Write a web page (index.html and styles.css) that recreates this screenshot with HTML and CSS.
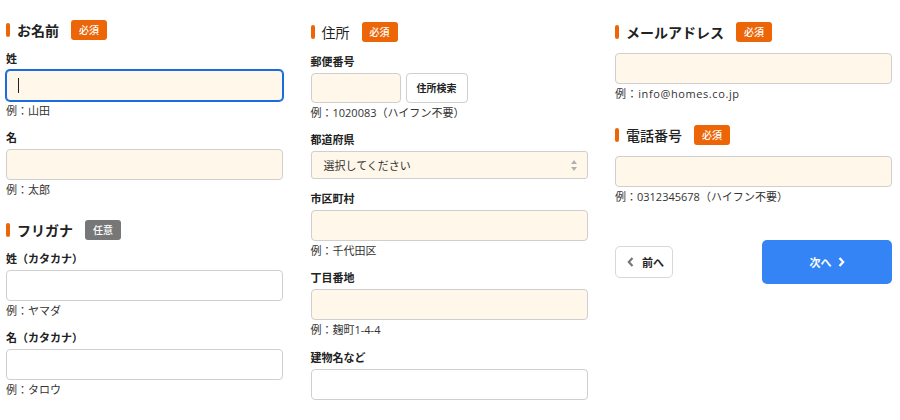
FILE: index.html
```html
<!DOCTYPE html>
<html lang="ja">
<head>
<meta charset="utf-8">
<title>お問い合わせフォーム</title>
<link rel="stylesheet" href="styles.css">
</head>
<body>
<div class="form">
  <div class="col col--name">
    <section class="section">
      <h2 class="heading"><span class="heading__title">お名前</span><span class="badge">必須</span></h2>
      <div class="field">
        <label class="label">姓</label>
        <div class="input input--focus"><span class="caret"></span></div>
        <p class="hint">例：山田</p>
      </div>
      <div class="field">
        <label class="label">名</label>
        <input class="input" type="text">
        <p class="hint">例：太郎</p>
      </div>
    </section>
    <section class="section">
      <h2 class="heading"><span class="heading__title">フリガナ</span><span class="badge badge--optional">任意</span></h2>
      <div class="field">
        <label class="label">姓（カタカナ）</label>
        <input class="input input--plain" type="text">
        <p class="hint">例：ヤマダ</p>
      </div>
      <div class="field">
        <label class="label">名（カタカナ）</label>
        <input class="input input--plain" type="text">
        <p class="hint">例：タロウ</p>
      </div>
    </section>
  </div>

  <div class="col col--offset">
    <section class="section section--wide">
      <h2 class="heading heading--light"><span class="heading__title">住所</span><span class="badge">必須</span></h2>
      <div class="field">
        <label class="label">郵便番号</label>
        <div class="postal">
          <input class="input input--postal" type="text">
          <button class="btn-search" type="button">住所検索</button>
        </div>
        <p class="hint">例：1020083（ハイフン不要）</p>
      </div>
      <div class="field">
        <label class="label">都道府県</label>
        <div class="select">
          <span>選択してください</span>
          <svg class="select__arrows" width="6" height="11" viewBox="0 0 6 11"><polygon points="0,4 3,0 6,4" fill="#b0b0b0"/><polygon points="0,7 3,11 6,7" fill="#b0b0b0"/></svg>
        </div>
      </div>
      <div class="field">
        <label class="label">市区町村</label>
        <input class="input" type="text">
        <p class="hint">例：千代田区</p>
      </div>
      <div class="field">
        <label class="label">丁目番地</label>
        <input class="input" type="text">
        <p class="hint">例：麹町1-4-4</p>
      </div>
      <div class="field">
        <label class="label">建物名など</label>
        <input class="input input--plain" type="text">
      </div>
    </section>
  </div>

  <div class="col col--offset col--contact">
    <section class="section">
      <h2 class="heading"><span class="heading__title">メールアドレス</span><span class="badge">必須</span></h2>
      <div class="field">
        <input class="input" type="text">
        <p class="hint hint--latin">例：info@homes.co.jp</p>
      </div>
    </section>
    <section class="section">
      <h2 class="heading heading--medium"><span class="heading__title">電話番号</span><span class="badge">必須</span></h2>
      <div class="field">
        <input class="input" type="text">
        <p class="hint">例：0312345678（ハイフン不要）</p>
      </div>
    </section>
    <div class="actions">
      <button class="btn-prev" type="button">
        <svg width="7" height="10" viewBox="0 0 7 10"><path d="M5.5 1 L1.8 5 L5.5 9" fill="none" stroke="#777" stroke-width="2.2"/></svg>
        <span>前へ</span>
      </button>
      <button class="btn-next" type="button">
        <span>次へ</span>
        <svg width="7" height="10" viewBox="0 0 7 10"><path d="M1.5 1 L5.2 5 L1.5 9" fill="none" stroke="#fff" stroke-width="2.2"/></svg>
      </button>
    </div>
  </div>
</div>
</body>
</html>
```

FILE: styles.css
```css
* {
  box-sizing: border-box;
}

body {
  margin: 0;
  background: #fff;
  color: #222;
  font-family: "Open Sans", "Noto Sans CJK JP", sans-serif;
}

.form {
  display: grid;
  grid-template-columns: repeat(3, 277px);
  column-gap: 27.5px;
  padding: 0 6px;
  align-items: start;
}

.col {
  display: flex;
  flex-direction: column;
  gap: 20px;
  padding-top: 20px;
}

.col--name {
  gap: 22px;
}

.col--offset {
  padding-top: 22px;
}

.col--contact {
  gap: 23px;
}

.section {
  display: flex;
  flex-direction: column;
  gap: 11px;
}

.section--wide {
  gap: 11.5px;
}

.heading {
  display: flex;
  align-items: center;
  height: 20px;
  margin: 0;
  font-size: 14px;
  font-weight: 700;
  color: #222;
}

.heading::before {
  content: "";
  width: 4px;
  height: 14px;
  margin-right: 7px;
  border-radius: 2px;
  background: #ec6608;
}

.heading--light {
  font-weight: 400;
}

.heading--medium {
  font-weight: 500;
}

.heading__title {
  margin-right: 12px;
}

.badge {
  display: inline-block;
  height: 20px;
  padding: 0 8px;
  border-radius: 3px;
  background: #ec6608;
  color: #fff;
  font-size: 10px;
  line-height: 20px;
  font-weight: 500;
}

.badge--optional {
  background: #777;
}

.field {
  display: flex;
  flex-direction: column;
}

.label {
  margin-bottom: 3px;
  font-size: 11px;
  line-height: 16px;
  font-weight: 700;
  color: #222;
}

.input {
  display: block;
  width: 100%;
  height: 31px;
  margin: 0;
  padding: 0 11px;
  border: 1px solid #cfcfcf;
  border-radius: 4px;
  background: #fef7ea;
  font: inherit;
  outline: none;
}

.input--plain {
  background: #fff;
}

.input--focus {
  display: flex;
  align-items: center;
  border-color: #1a6be0;
  box-shadow: 0 0 0 1px #1a6be0;
}

.caret {
  width: 1px;
  height: 15px;
  background: #222;
}

.hint {
  margin: 2px 0 0;
  font-size: 11px;
  line-height: 16px;
  color: #333;
}

.hint--latin {
  letter-spacing: 0.6px;
}

.postal {
  display: flex;
  gap: 5px;
}

.input--postal {
  width: 90px;
  height: 30px;
}

.btn-search {
  width: 62px;
  height: 30px;
  padding: 0;
  border: 1px solid #cfcfcf;
  border-radius: 4px;
  background: #fff;
  color: #222;
  font-family: inherit;
  font-size: 10px;
  font-weight: 700;
}

.select {
  display: flex;
  align-items: center;
  justify-content: space-between;
  height: 28px;
  padding: 0 10px 0 12px;
  border: 1px solid #cfcfcf;
  border-radius: 3px;
  background: #fef7ea;
  font-size: 11px;
  color: #333;
}

.actions {
  display: flex;
  align-items: center;
  justify-content: space-between;
  margin-top: 12px;
}

.btn-prev {
  display: flex;
  align-items: center;
  gap: 8px;
  width: 58px;
  height: 32px;
  padding: 0 0 0 11px;
  border: 1px solid #d8d8d8;
  border-radius: 5px;
  background: #fff;
  color: #222;
  font-family: inherit;
  font-size: 11px;
  font-weight: 700;
}

.btn-next {
  display: flex;
  align-items: center;
  justify-content: center;
  gap: 6px;
  width: 130px;
  height: 44px;
  padding: 0;
  border: none;
  border-radius: 5px;
  background: #3584f6;
  color: #fff;
  font-family: inherit;
  font-size: 11px;
  font-weight: 700;
}
```
